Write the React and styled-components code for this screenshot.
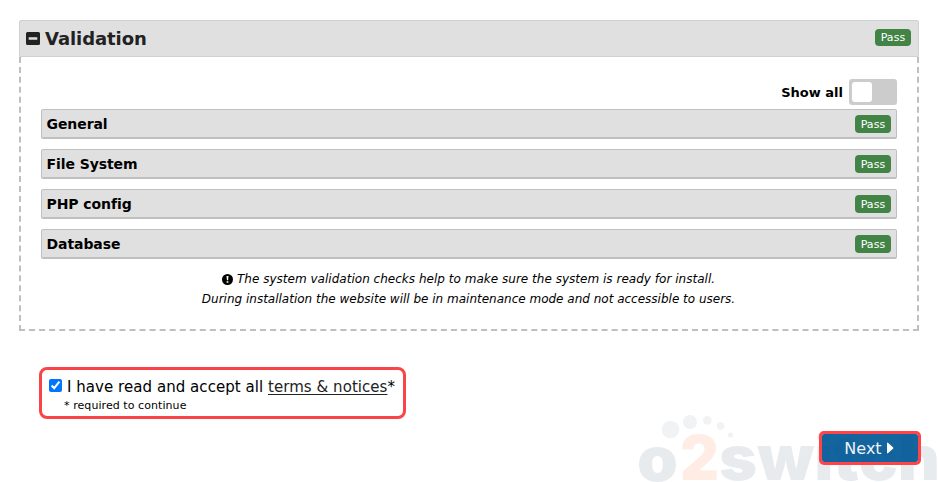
import React, { useState } from "react";
import styled, { createGlobalStyle } from "styled-components";

const Global = createGlobalStyle`
  * { box-sizing: border-box; }
  body {
    margin: 0;
    background: #fff;
    color: #000;
    font-family: Verdana, "DejaVu Sans", sans-serif;
    overflow: hidden;
  }
`;

const Page = styled.main`
  position: relative;
  width: 938px;
  height: 482px;
  padding: 20px 19px 0;
  overflow: hidden;
`;

const Header = styled.header`
  display: flex;
  align-items: center;
  height: 37px;
  padding: 0 7px 0 6px;
  background: #e0e0e0;
  border: 1px solid #d0d0d0;
  border-radius: 2px 2px 0 0;
`;

const Title = styled.h1`
  flex: 1;
  margin: 0 0 0 5px;
  color: #222;
  font-size: 18px;
  line-height: 24px;
  letter-spacing: -0.07px;
`;

const Badge = styled.span`
  display: block;
  width: 36px;
  height: ${(p) => p.$height || 18}px;
  line-height: ${(p) => p.$height || 18}px;
  border-radius: 4px;
  background: #418446;
  color: #fff;
  font-size: 11px;
  letter-spacing: 0.1px;
  text-align: center;
  margin-top: ${(p) => p.$shift || 0}px;
`;

const Panel = styled.section`
  height: 274px;
  padding: 22px 20px 0;
  border: 2px dashed #bfbfbf;
  border-top: 0;
`;

const ShowAll = styled.label`
  display: flex;
  align-items: center;
  justify-content: flex-end;
  gap: 6px;
  height: 26px;
  margin-bottom: 4px;
  font-size: 13px;
  font-weight: bold;
`;

const Switch = styled.button`
  width: 48px;
  height: 26px;
  padding: 3px;
  border: 0;
  border-radius: 3px;
  background: #ccc;
  display: flex;
  justify-content: ${(p) => (p.$on ? "flex-end" : "flex-start")};
`;

const Knob = styled.span`
  width: 20px;
  height: 20px;
  border-radius: 3px;
  background: #fff;
`;

const Checks = styled.div`
  display: grid;
  gap: 10px;
`;

const Check = styled.div`
  display: flex;
  align-items: center;
  justify-content: space-between;
  height: 30px;
  padding: 0 5px;
  background: #e0e0e0;
  border: 1px solid #c0c0c0;
  border-bottom-width: 2px;
  border-radius: 2px;
  font-size: 14px;
  font-weight: bold;

  ${Badge} {
    font-weight: normal;
    margin-top: 1px;
    padding-top: 0.5px;
  }
`;

const CheckName = styled.span`
  margin-left: -0.5px;
  letter-spacing: -0.08px;
`;

const Note = styled.p`
  margin: 10px 1px 0 0;
  text-align: center;
  font-size: 12px;
  font-style: italic;
  line-height: 20px;
`;

const NoteLine = styled.span`
  display: flex;
  align-items: center;
  justify-content: center;
  gap: 4px;
  white-space: nowrap;
  letter-spacing: ${(p) => p.$spacing || "0"};
`;

const Terms = styled.div`
  width: 367px;
  height: 52px;
  margin: 36px 0 0 20px;
  padding: 8px 0 0 7px;
  border: 3px solid #fb4447;
  border-radius: 8px;
`;

const Accept = styled.label`
  display: flex;
  align-items: center;
  height: 18px;
  white-space: nowrap;
  font-size: 15px;
  letter-spacing: 0.05px;
`;

const Tick = styled.input`
  width: 13px;
  height: 13px;
  margin: -3px 5px 0 0;
  flex: none;
  accent-color: #0075ff;
`;

const Link = styled.a`
  color: #222;
  text-decoration: underline;
  text-underline-offset: 2px;
`;

const Required = styled.div`
  margin-left: 15px;
  font-size: 11px;
  line-height: 19px;
  letter-spacing: 0.07px;
`;

const Actions = styled.div`
  display: flex;
  justify-content: flex-end;
  margin: 12px -2px 0 0;
`;

const Next = styled.button`
  position: relative;
  z-index: 1;
  display: flex;
  align-items: center;
  justify-content: center;
  gap: 5px;
  width: 102px;
  height: 34px;
  padding: 0 2px 0 0;
  border: 3px solid #ff4346;
  border-radius: 5px;
  background: rgba(0, 87, 150, 0.92) padding-box;
  color: #eef3f6;
  font: 16px Verdana, "DejaVu Sans", sans-serif;
`;

const Watermark = styled.svg`
  position: absolute;
  left: 628px;
  top: 402px;
  pointer-events: none;
`;

const Collapse = () => (
  <svg width="14" height="14" viewBox="0 0 14 14" aria-hidden="true">
    <path fillRule="evenodd" fill="#222" d="M1.5 0h11Q14 0 14 1.5v10q0 1.5-1.5 1.5h-11Q0 13 0 11.5v-10Q0 0 1.5 0ZM2.7 5.2v2.6h8.6V5.2Z" />
  </svg>
);

const Info = () => (
  <svg width="11" height="11" viewBox="0 0 11 11" aria-hidden="true">
    <circle cx="5.5" cy="5.5" r="5.5" />
    <path fill="#fff" d="M4.5 2h2L6.1 6.3H4.9ZM4.6 7.2h1.8v1.6H4.6Z" />
  </svg>
);

const Brand = () => (
  <Watermark width="310" height="80" viewBox="0 0 310 80" aria-hidden="true">
    <g fill="#173f5d" fillOpacity=".065">
      <circle cx="42.5" cy="27.5" r="8.8" />
      <circle cx="62" cy="20" r="7" />
      <circle cx="79.3" cy="18.3" r="4.4" />
      <circle cx="92.5" cy="24" r="3.8" />
      <circle cx="102.5" cy="33" r="2.6" />
    </g>
    <g fontFamily="Inter, sans-serif" fontWeight="900" fontSize="62">
      <text x="9" y="79" textLength="41" lengthAdjust="spacingAndGlyphs" fill="#123e58" fillOpacity=".1">o</text>
      <text x="52" y="77.5" textLength="39" lengthAdjust="spacingAndGlyphs" fill="#ff6020" fillOpacity=".12">2</text>
      <text x="91" y="77.5" textLength="221" lengthAdjust="spacingAndGlyphs" fill="#123e58" fillOpacity=".1">switch</text>
    </g>
  </Watermark>
);

const checks = ["General", "File System", "PHP config", "Database"];

export default function App() {
  const [showAll, setShowAll] = useState(false);
  return (
    <Page>
      <Global />
      <Header>
        <Collapse />
        <Title>Validation</Title>
        <Badge $height={17} $shift={-2}>Pass</Badge>
      </Header>
      <Panel>
        <ShowAll>
          <span>Show all</span>
          <Switch $on={showAll} onClick={() => setShowAll(!showAll)} aria-label="Show all"><Knob /></Switch>
        </ShowAll>
        <Checks>
          {checks.map((name) => (
            <Check key={name}>
              <CheckName>{name}</CheckName>
              <Badge>Pass</Badge>
            </Check>
          ))}
        </Checks>
        <Note>
          <NoteLine $spacing="0.02px"><Info />The system validation checks help to make sure the system is ready for install.</NoteLine>
          <NoteLine>During installation the website will be in maintenance mode and not accessible to users.</NoteLine>
        </Note>
      </Panel>
      <Terms>
        <Accept>
          <Tick type="checkbox" defaultChecked />
          <span>I have read and accept all <Link>terms &amp; notices</Link>*</span>
        </Accept>
        <Required>* required to continue</Required>
      </Terms>
      <Actions>
        <Next>
          <span>Next</span>
          <svg width="7" height="12" viewBox="0 0 7 12"><path fill="#fff" d="M0 1.5Q0 0 1.2 1L6 5.3q.7.7 0 1.4L1.2 11Q0 12 0 10.5Z" /></svg>
        </Next>
      </Actions>
      <Brand />
    </Page>
  );
}
